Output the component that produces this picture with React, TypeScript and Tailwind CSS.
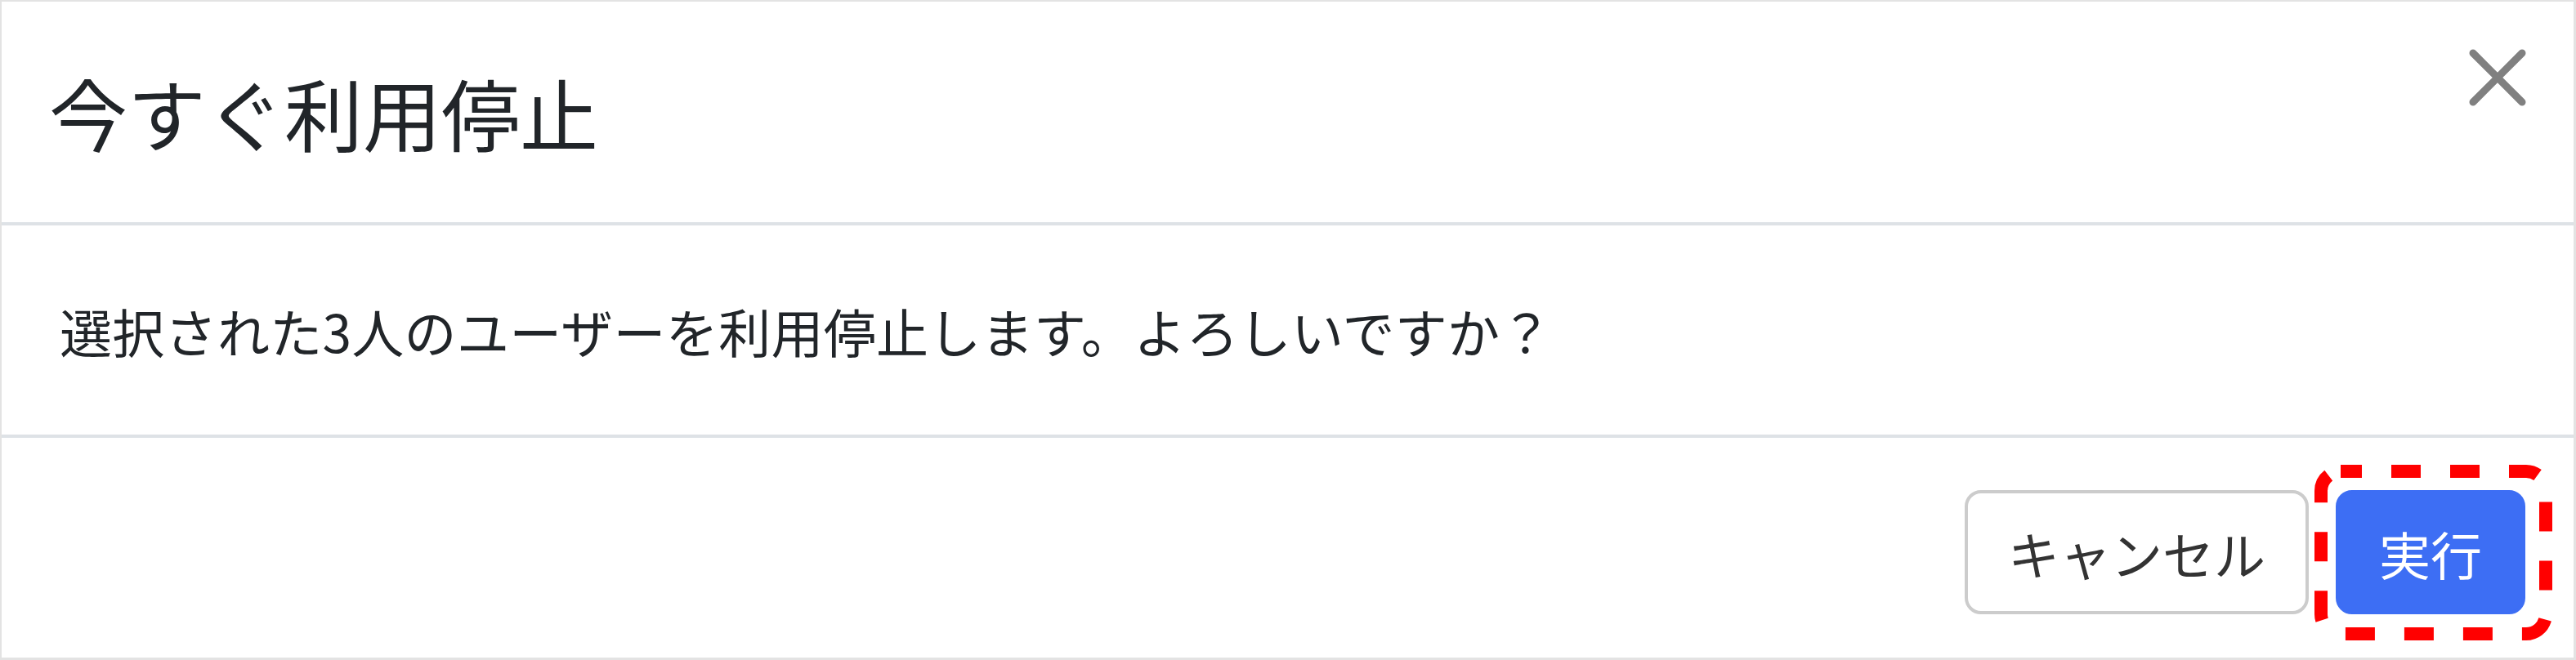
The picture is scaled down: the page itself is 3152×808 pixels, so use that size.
import React from "react";

export default function App() {
  return (
    <div className="w-[3152px] h-[808px] bg-white border-t-2 border-l-2 border-r-[3px] border-b-[3px] border-[#e3e3e3] flex flex-col font-['Noto_Sans_CJK_JP','Noto_Sans',sans-serif] text-[#212529]">
      <div className="h-[274px] shrink-0 flex items-center justify-between pl-[58px] pr-[58px] border-b-4 border-[#dee2e6]">
        <h5 className="text-[96px] leading-none font-normal">今すぐ利用停止</h5>
        <button className="self-start mt-[58px] w-[70px] h-[70px]" aria-label="close">
          <svg width="70" height="70" viewBox="0 0 70 70">
            <line x1="5" y1="5" x2="65" y2="65" stroke="#808080" strokeWidth="9" strokeLinecap="round" />
            <line x1="65" y1="5" x2="5" y2="65" stroke="#808080" strokeWidth="9" strokeLinecap="round" />
          </svg>
        </button>
      </div>
      <div className="h-[260px] shrink-0 flex items-center pl-[71px] border-b-4 border-[#dee2e6]">
        <p className="text-[64px] leading-none tracking-[0.3px]">選択された3人のユーザーを利用停止します。よろしいですか？</p>
      </div>
      <div className="flex-1 flex justify-end items-start pt-[64px] pr-[59px] gap-[33px]">
        <button className="h-[152px] px-[49px] border-4 border-[#cccccc] rounded-[20px] bg-white text-[#333333] text-[63px] leading-none">
          キャンセル
        </button>
        <div className="relative">
          <button className="h-[152px] px-[49px] border-4 border-[#3d6ef4] rounded-[20px] bg-[#3d6ef4] text-white text-[63px] leading-none">
            実行
          </button>
          <svg
            className="absolute left-[-26px] top-[-31px] pointer-events-none"
            width="291"
            height="215"
            viewBox="0 0 291 215"
          >
            <rect
              x="8"
              y="8"
              width="275"
              height="199"
              rx="24"
              ry="24"
              fill="none"
              stroke="#ff0000"
              strokeWidth="16"
              strokeDasharray="36 36"
              strokeDashoffset="10"
            />
          </svg>
        </div>
      </div>
    </div>
  );
}
